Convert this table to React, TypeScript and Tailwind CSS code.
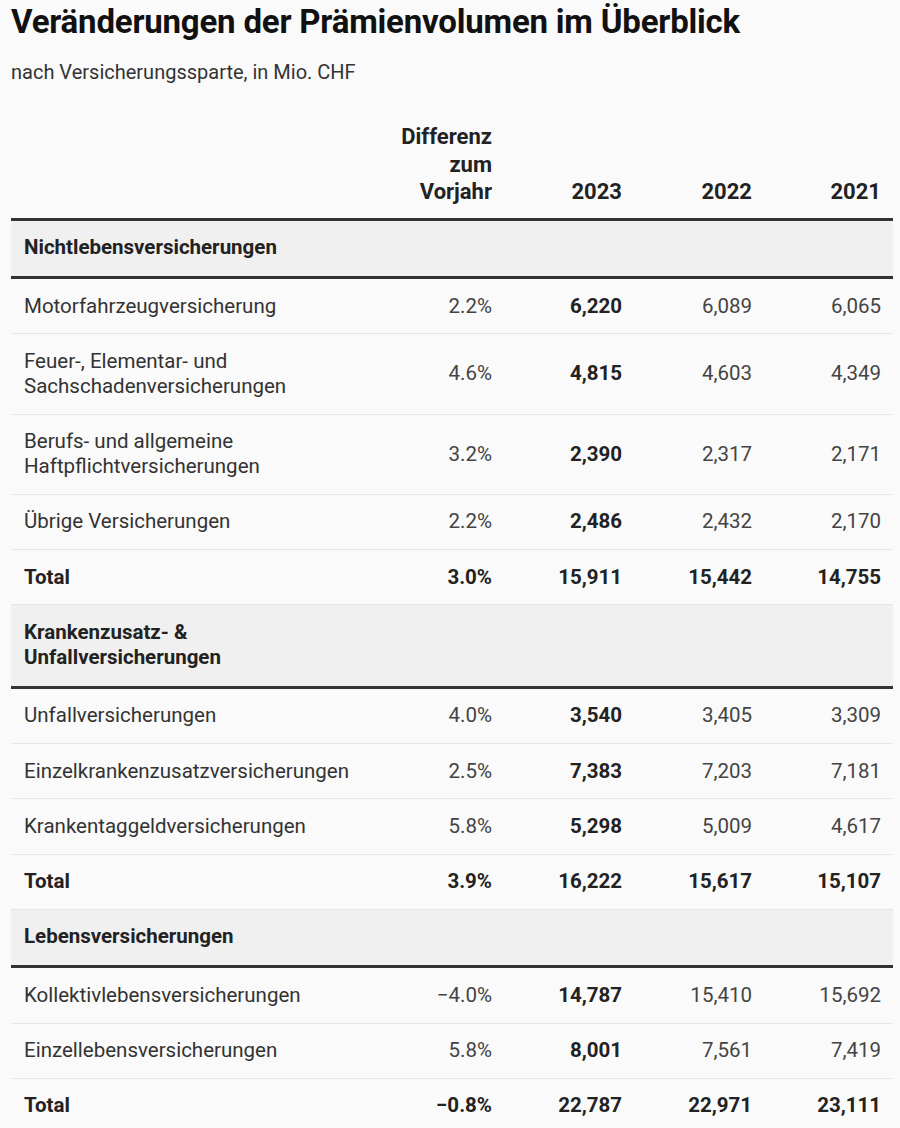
const sections = [
  {
    name: 'Nichtlebensversicherungen',
    rows: [
      ['Motorfahrzeugversicherung', '2.2%', '6,220', '6,089', '6,065'],
      ['Feuer-, Elementar- und Sachschadenversicherungen', '4.6%', '4,815', '4,603', '4,349'],
      ['Berufs- und allgemeine Haftpflichtversicherungen', '3.2%', '2,390', '2,317', '2,171'],
      ['Übrige Versicherungen', '2.2%', '2,486', '2,432', '2,170'],
    ],
    total: ['3.0%', '15,911', '15,442', '14,755'],
  },
  {
    name: 'Krankenzusatz- & Unfallversicherungen',
    rows: [
      ['Unfallversicherungen', '4.0%', '3,540', '3,405', '3,309'],
      ['Einzelkrankenzusatzversicherungen', '2.5%', '7,383', '7,203', '7,181'],
      ['Krankentaggeldversicherungen', '5.8%', '5,298', '5,009', '4,617'],
    ],
    total: ['3.9%', '16,222', '15,617', '15,107'],
  },
  {
    name: 'Lebensversicherungen',
    rows: [
      ['Kollektivlebensversicherungen', '−4.0%', '14,787', '15,410', '15,692'],
      ['Einzellebensversicherungen', '5.8%', '8,001', '7,561', '7,419'],
    ],
    total: ['−0.8%', '22,787', '22,971', '23,111'],
  },
];

const cell = 'py-[14.625px] px-[12px] text-right align-middle leading-[25px]';
const head = 'pb-[12px] pr-[12px] text-right align-bottom font-bold text-[22px] leading-[27.5px] text-[#222]';

export default function App() {
  return (
    <div className="min-h-[1128px] w-[900px] bg-[#fafafa] font-['Roboto',sans-serif] text-[#333]">
      <div className="px-[11px] pt-[2px]">
        <h1 className="text-[33px] font-bold leading-[40px] text-[#111] tracking-[-0.2px]">
          Veränderungen der Prämienvolumen im Überblick
        </h1>
        <p className="mt-[17px] text-[20px] leading-[26px] text-[#333]">nach Versicherungssparte, in Mio. CHF</p>

        <table className="mt-[38px] w-[882px] table-fixed border-collapse text-[20.5px]">
          <colgroup>
            <col className="w-[381px]" />
            <col className="w-[112px]" />
            <col className="w-[130px]" />
            <col className="w-[130px]" />
            <col className="w-[129px]" />
          </colgroup>
          <thead>
            <tr className="border-b-[3px] border-[#333]">
              <th className="pb-[12px]"></th>
              <th className={head + ' pl-[4px]'}>Differenz zum Vorjahr</th>
              <th className={head}>2023</th>
              <th className={head}>2022</th>
              <th className={head}>2021</th>
            </tr>
          </thead>
          {sections.map((s) => (
            <tbody key={s.name}>
              <tr className="border-b-[3px] border-[#333] bg-[#f0f0f0]">
                <td className="pt-[14.5px] pb-[16px] pl-[13px] pr-[100px] font-bold leading-[25px] text-[#222]">{s.name}</td>
                <td colSpan={4}></td>
              </tr>
              {s.rows.map((r) => (
                <tr key={r[0]} className="border-b border-[#e6e6e6]">
                  <td className="py-[14.625px] pl-[13px] pr-[12px] leading-[25px] text-[#333]">{r[0]}</td>
                  <td className={cell + ' text-[#444]'}>{r[1]}</td>
                  <td className={cell + ' font-bold text-[#222]'}>{r[2]}</td>
                  <td className={cell + ' text-[#444]'}>{r[3]}</td>
                  <td className={cell + ' text-[#444]'}>{r[4]}</td>
                </tr>
              ))}
              <tr className="border-b border-[#e6e6e6]">
                <td className="py-[14.625px] pl-[13px] font-bold leading-[25px] text-[#222]">Total</td>
                {s.total.map((v, i) => (
                  <td key={i} className={cell + ' font-bold text-[#222]'}>
                    {v}
                  </td>
                ))}
              </tr>
            </tbody>
          ))}
        </table>
      </div>
    </div>
  );
}
